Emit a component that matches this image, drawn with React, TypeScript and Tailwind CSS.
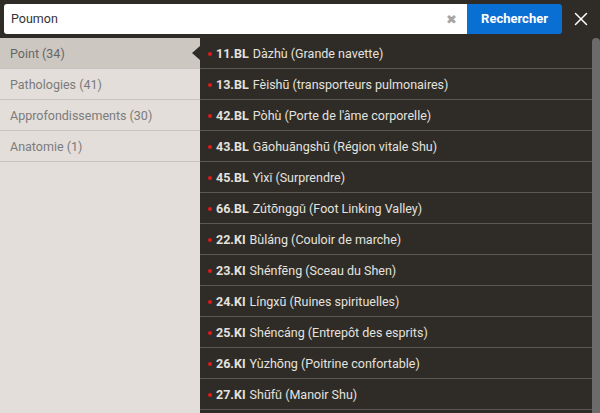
import { X } from "lucide-react"

const categories = [
  { label: "Point (34)", active: true },
  { label: "Pathologies (41)" },
  { label: "Approfondissements (30)" },
  { label: "Anatomie (1)" },
]

const points = [
  ["11.BL", "Dàzhù (Grande navette)"],
  ["13.BL", "Fèishū (transporteurs pulmonaires)"],
  ["42.BL", "Pòhù (Porte de l'âme corporelle)"],
  ["43.BL", "Gāohuāngshū (Région vitale Shu)"],
  ["45.BL", "Yìxǐ (Surprendre)"],
  ["66.BL", "Zútōnggǔ (Foot Linking Valley)"],
  ["22.KI", "Bùláng (Couloir de marche)"],
  ["23.KI", "Shénfēng (Sceau du Shen)"],
  ["24.KI", "Língxū (Ruines spirituelles)"],
  ["25.KI", "Shéncáng (Entrepôt des esprits)"],
  ["26.KI", "Yùzhōng (Poitrine confortable)"],
  ["27.KI", "Shūfǔ (Manoir Shu)"],
  ["", ""],
]

export default function App() {
  return (
    <div className="w-[600px] h-[413px] overflow-hidden bg-[#2f2c28] flex flex-col font-['Roboto',sans-serif]">
      {/* Search bar */}
      <header className="h-[38px] shrink-0 flex items-center pl-1">
        <div className="flex h-[30px] w-[558px]">
          <div className="flex-1 bg-white rounded-l-[3px] flex items-center pl-[7px] pr-[10px]">
            <span className="flex-1 text-[12.5px] text-[#333]">Poumon</span>
            <span className="text-[13px] text-[#a5a5a5] leading-none">✖</span>
          </div>
          <button className="w-[95px] bg-[#0a6fd3] rounded-r-[3px] text-white text-[13px] font-bold">
            Rechercher
          </button>
        </div>
        <div className="flex-1 flex justify-center">
          <X className="w-[22px] h-[22px] text-white" strokeWidth={1.6} />
        </div>
      </header>

      <div className="flex flex-1 min-h-0">
        {/* Categories */}
        <aside className="w-[200px] shrink-0 bg-[#e3deda]">
          {categories.map((c) => (
            <div
              key={c.label}
              className={`relative h-[31px] flex items-center pt-[2px] px-[10px] border-b border-[#c9c4bf] text-[12.5px] ${
                c.active ? "bg-[#ccc7c1] text-[#666]" : "text-[#7b7b7b]"
              }`}
            >
              {c.label}
              {c.active && (
                <span className="absolute right-0 top-1/2 -translate-y-1/2 w-0 h-0 border-y-[7px] border-y-transparent border-r-[8px] border-r-[#2f2c28]" />
              )}
            </div>
          ))}
        </aside>

        {/* Results */}
        <main className="flex-1 flex">
          <div className="flex-1">
            {points.map(([code, name], i) => (
              <div key={i} className="h-[31px] flex items-center pt-[2px] pl-[8px] border-b border-[#5c5955] text-[12.5px] text-[#e4e2df]">
                {code && (
                  <>
                    <span className="w-[4px] h-[4px] rounded-full bg-[#e01b1b] mr-[4px]" />
                    <span className="font-bold mr-[4px]">{code}</span>
                    <span>{name}</span>
                  </>
                )}
              </div>
            ))}
          </div>
          <div className="w-[8px] bg-[#2f2c28] flex">
            <div className="flex-1 bg-[#6b6b6b] rounded-t-[4px]" />
          </div>
        </main>
      </div>
    </div>
  )
}
